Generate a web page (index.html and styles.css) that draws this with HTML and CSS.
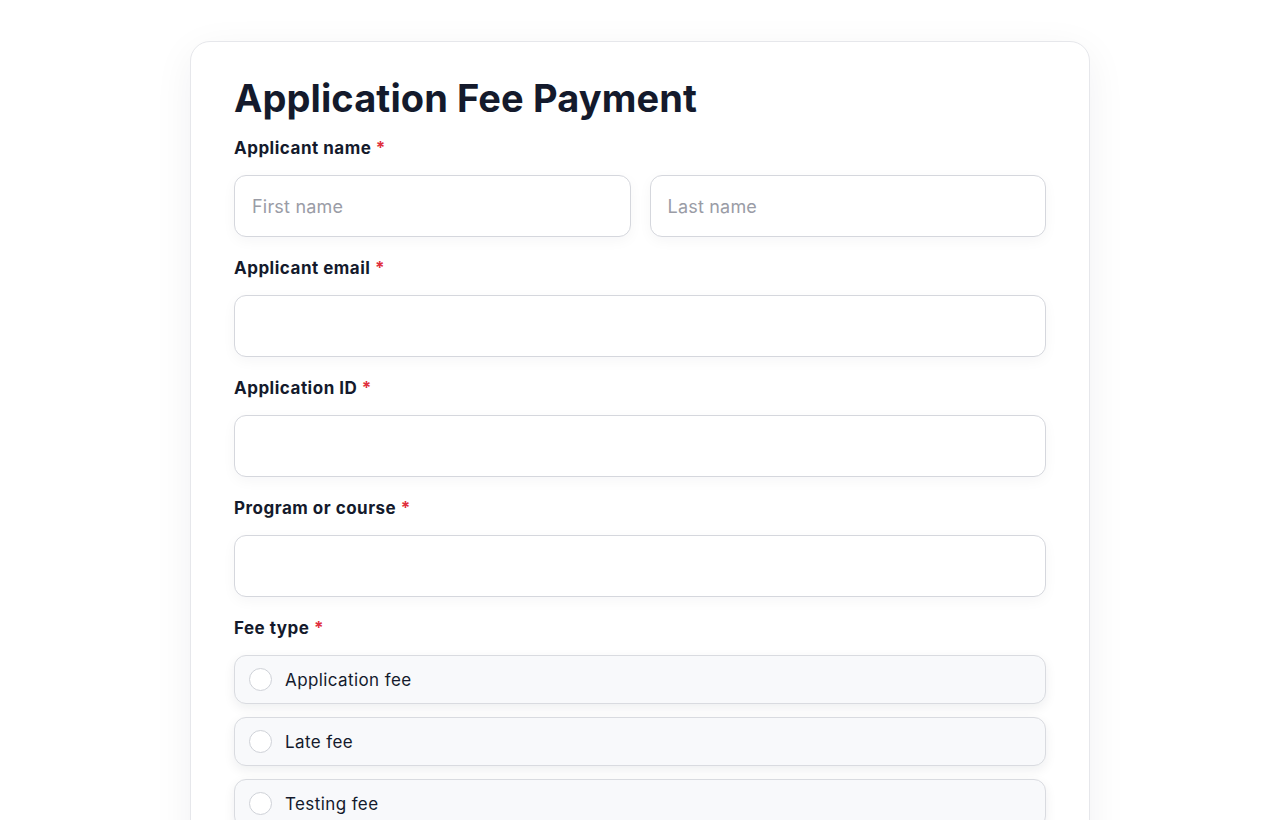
FILE: index.html
```html
<!DOCTYPE html>
<html lang="en">
<head>
  <meta charset="UTF-8" />
  <meta name="viewport" content="width=device-width, initial-scale=1" />
  <title>Application Fee Payment</title>
  <link rel="stylesheet" href="styles.css">
</head>
<body>
  <div class="form-card">
    <h1>Application Fee Payment</h1>

    <div class="field">
      <label>Applicant name <span class="req">*</span></label>
      <div class="row">
        <input type="text" placeholder="First name" />
        <input type="text" placeholder="Last name" />
      </div>
    </div>

    <div class="field">
      <label>Applicant email <span class="req">*</span></label>
      <input type="email" />
    </div>

    <div class="field">
      <label>Application ID <span class="req">*</span></label>
      <input type="text" />
    </div>

    <div class="field">
      <label>Program or course <span class="req">*</span></label>
      <input type="text" />
    </div>

    <div class="field">
      <label>Fee type <span class="req">*</span></label>
      <div class="options">
        <div class="option"><span class="radio"></span>Application fee</div>
        <div class="option"><span class="radio"></span>Late fee</div>
        <div class="option"><span class="radio"></span>Testing fee</div>
      </div>
    </div>
  </div>
</body>
</html>
```

FILE: styles.css
```css
body {
  margin: 0;
  padding: 41px 0 0;
  font-family: Inter, "Noto Sans", sans-serif;
  background-color: #fff;
  color: #141a2c;
  overflow: hidden;
}

.form-card {
  width: 900px;
  margin: 0 auto;
  box-sizing: border-box;
  padding: 30px 43px 60px;
  border: 1px solid #e6e7eb;
  border-radius: 20px;
  background-color: #fff;
  box-shadow: 0 10px 40px rgba(20, 26, 44, 0.06);
}

h1 {
  margin: 0 0 13px;
  font-size: 38px;
  line-height: 52px;
  font-weight: 700;
  letter-spacing: 0.1px;
}

.field {
  margin-bottom: 20px;
}

label {
  display: block;
  font-size: 17px;
  line-height: 22px;
  font-weight: 700;
  letter-spacing: 0.5px;
  margin-bottom: 16px;
}

.req {
  color: #e0303e;
}

.row {
  display: flex;
  gap: 19px;
}

input {
  display: block;
  width: 100%;
  height: 62px;
  box-sizing: border-box;
  padding: 0 17px;
  font-family: inherit;
  font-size: 18px;
  letter-spacing: 0.2px;
  color: #141a2c;
  border: 1px solid #d5d7dd;
  border-radius: 12px;
  background-color: #fff;
  box-shadow: 0 4px 14px rgba(20, 26, 44, 0.04);
  outline: none;
}

input::placeholder {
  color: #9a9ca6;
}

.options {
  display: flex;
  flex-direction: column;
  gap: 13px;
}

.option {
  display: flex;
  align-items: center;
  gap: 13px;
  height: 49px;
  box-sizing: border-box;
  padding: 0 14px;
  font-size: 17px;
  letter-spacing: 0.4px;
  border: 1px solid #d9dbe0;
  border-radius: 12px;
  background-color: #f8f9fb;
  box-shadow: 0 4px 12px rgba(20, 26, 44, 0.07);
}

.radio {
  width: 23px;
  height: 23px;
  box-sizing: border-box;
  border: 1px solid #cfd2d8;
  border-radius: 50%;
  background-color: #fff;
}
```
